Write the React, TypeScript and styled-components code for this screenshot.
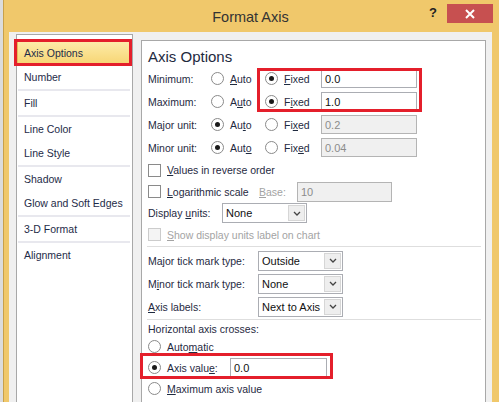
import styled, { createGlobalStyle } from 'styled-components';

const GlobalStyle = createGlobalStyle`
  html, body { margin: 0; padding: 0; }
  body {
    width: 499px;
    height: 402px;
    overflow: hidden;
    background: #dcdcdc;
    font-family: 'Liberation Sans', Arial, sans-serif;
    font-size: 10.5px;
    color: #1f2a3f;
  }
`;

const Screen = styled.div`
  position: relative;
  width: 499px;
  height: 402px;
  overflow: hidden;
  padding-left: 3px;
  box-sizing: border-box;
`;

const Window = styled.div`
  height: 440px;
  background: #f0c86b;
  border-left: 1px solid #c9a14a;
  padding: 0 7px 0 5px;
  display: flex;
  flex-direction: column;
`;

const TitleBar = styled.div`
  display: grid;
  grid-template-columns: 1fr auto 1fr;
  height: 32px;
  flex: none;
`;

const Title = styled.div`
  grid-column: 2;
  margin-top: 8px;
  font-size: 14.5px;
  line-height: 18px;
  color: #333;
`;

const Controls = styled.div`
  grid-column: 3;
  justify-self: end;
  display: flex;
  align-items: flex-start;
  gap: 7px;
  margin-top: 4px;
  margin-right: -1px;
`;

const HelpButton = styled.div`
  width: 14px;
  text-align: center;
  font-weight: bold;
  font-size: 13px;
  line-height: 18px;
  color: #222;
`;

const CloseButton = styled.div`
  width: 46px;
  height: 19px;
  background: #c75050;
  display: flex;
  align-items: center;
  justify-content: center;
`;

const Client = styled.div`
  flex: 1;
  background: #f0f0f0;
  display: flex;
  gap: 8px;
  padding: 2px 6px 0 7px;
`;

const Nav = styled.div`
  width: 117px;
  flex: none;
  box-sizing: border-box;
  background: #fff;
  border: 1px solid #a8a8a8;
  padding-top: 6px;
`;

const NavItem = styled.div<{ $selected?: boolean }>`
  height: 24px;
  box-sizing: border-box;
  margin-right: 2px;
  display: flex;
  align-items: center;
  padding-left: ${(p) => (p.$selected ? '6px' : '7px')};
  color: #1e2b48;
  font-size: 10.5px;
  ${(p) =>
    p.$selected &&
    `
    background: linear-gradient(#fdeca8, #f7d574);
    border: 1px solid #e3bd58;
  `}
`;

const NavDivider = styled.div`
  height: 2px;
  margin: 0 2px 0 1px;
  background: #e8e8ee;
`;

const Panel = styled.div`
  flex: 1;
  margin-top: 6px;
  background: #fff;
  border: 1px solid #a8a8a8;
  padding: 0 4px 0 6px;
`;

const Heading = styled.div`
  margin-top: 6px;
  font-size: 15px;
  line-height: 20px;
  color: #1e2a40;
`;

const Row = styled.div<{ $h: number }>`
  display: flex;
  align-items: center;
  height: ${(p) => p.$h}px;
`;

const Label = styled.div<{ $w?: number; $disabled?: boolean }>`
  width: ${(p) => (p.$w ? `${p.$w}px` : 'auto')};
  flex: none;
  white-space: nowrap;
  color: ${(p) => (p.$disabled ? '#a3a3a3' : '#1f2a3f')};
`;

const Option = styled.div<{ $w?: number; $disabled?: boolean }>`
  display: flex;
  align-items: center;
  gap: 6px;
  width: ${(p) => (p.$w ? `${p.$w}px` : 'auto')};
  flex: none;
  white-space: nowrap;
  color: ${(p) => (p.$disabled ? '#a3a3a3' : '#1f2a3f')};
`;

const Radio = styled.span<{ $checked?: boolean }>`
  width: 13px;
  height: 13px;
  box-sizing: border-box;
  border-radius: 50%;
  border: 1px solid #8a8a8a;
  background: #fff;
  display: flex;
  align-items: center;
  justify-content: center;
  flex: none;
  &::after {
    content: '';
    width: 5px;
    height: 5px;
    border-radius: 50%;
    background: ${(p) => (p.$checked ? '#1a1a1a' : 'transparent')};
  }
`;

const CheckBox = styled.span<{ $disabled?: boolean }>`
  width: 13px;
  height: 13px;
  box-sizing: border-box;
  border: 1px solid ${(p) => (p.$disabled ? '#cccccc' : '#8a8a8a')};
  background: ${(p) => (p.$disabled ? '#f4f4f4' : '#fff')};
  flex: none;
`;

const TextInput = styled.div<{ $w: number; $h?: number; $disabled?: boolean }>`
  width: ${(p) => p.$w}px;
  height: ${(p) => p.$h ?? 19}px;
  box-sizing: border-box;
  flex: none;
  display: flex;
  align-items: center;
  padding-left: 3px;
  font-size: 11px;
  border: 1px solid ${(p) => (p.$disabled ? '#b4b4b4' : '#abadb3')};
  background: ${(p) => (p.$disabled ? '#f0f0f0' : '#fff')};
  color: ${(p) => (p.$disabled ? '#8c8c8c' : '#111')};
`;

const Select = styled.div<{ $w: number }>`
  width: ${(p) => p.$w}px;
  height: 20px;
  box-sizing: border-box;
  flex: none;
  display: flex;
  border: 1px solid #abadb3;
  background: #fff;
`;

const SelectValue = styled.div`
  flex: 1;
  display: flex;
  align-items: center;
  padding-left: 3px;
  font-size: 11px;
  color: #111;
  white-space: nowrap;
  overflow: hidden;
`;

const SelectButton = styled.div`
  width: 17px;
  margin: 1px;
  box-sizing: border-box;
  border: 1px solid #d6d6d6;
  background: #eeeeee;
  display: flex;
  align-items: center;
  justify-content: center;
`;

const Divider = styled.div`
  height: 1px;
  margin: 1px 0 2px -1px;
  background: #dedede;
`;

const Key = styled.span`
  text-decoration: underline;
  text-underline-offset: 1px;
`;

const Callout = styled.div<{ $x: number; $y: number; $w: number; $h: number }>`
  position: absolute;
  left: ${(p) => p.$x}px;
  top: ${(p) => p.$y}px;
  width: ${(p) => p.$w}px;
  height: ${(p) => p.$h}px;
  box-sizing: border-box;
  border: 3px solid #e41f2b;
  pointer-events: none;
`;

const Chevron = () => (
  <svg width="8" height="5" viewBox="0 0 8 5">
    <polyline points="1,1 4,4 7,1" fill="none" stroke="#444" strokeWidth="1.3" />
  </svg>
);

function Dropdown({ w, value }: { w: number; value: string }) {
  return (
    <Select $w={w}>
      <SelectValue>{value}</SelectValue>
      <SelectButton>
        <Chevron />
      </SelectButton>
    </Select>
  );
}

const navGroups = [
  ['Axis Options', 'Number'],
  ['Fill'],
  ['Line Color', 'Line Style'],
  ['Shadow', 'Glow and Soft Edges'],
  ['3-D Format'],
  ['Alignment'],
];

type BoundRow = {
  label: string;
  auto: [string, string, string];
  fixed: [string, string, string];
  autoOn: boolean;
  value: string;
};

const boundRows: BoundRow[] = [
  { label: 'Minimum:', auto: ['', 'A', 'uto'], fixed: ['', 'F', 'ixed'], autoOn: false, value: '0.0' },
  { label: 'Maximum:', auto: ['A', 'u', 'to'], fixed: ['F', 'i', 'xed'], autoOn: false, value: '1.0' },
  { label: 'Major unit:', auto: ['Au', 't', 'o'], fixed: ['Fi', 'x', 'ed'], autoOn: true, value: '0.2' },
  { label: 'Minor unit:', auto: ['Aut', 'o', ''], fixed: ['Fix', 'e', 'd'], autoOn: true, value: '0.04' },
];

const Keyed = ({ parts }: { parts: [string, string, string] }) => (
  <span>
    {parts[0]}
    <Key>{parts[1]}</Key>
    {parts[2]}
  </span>
);

export default function App() {
  return (
    <>
      <GlobalStyle />
      <Screen>
        <Window>
          <TitleBar>
            <Title>Format Axis</Title>
            <Controls>
              <HelpButton>?</HelpButton>
              <CloseButton>
                <svg width="10" height="10" viewBox="0 0 10 10">
                  <path d="M1 1 L9 9 M9 1 L1 9" stroke="#fff" strokeWidth="2" />
                </svg>
              </CloseButton>
            </Controls>
          </TitleBar>

          <Client>
            <Nav>
              {navGroups.map((group, gi) => (
                <div key={gi}>
                  {gi > 0 && <NavDivider />}
                  {group.map((item) => (
                    <NavItem key={item} $selected={item === 'Axis Options'}>
                      {item}
                    </NavItem>
                  ))}
                </div>
              ))}
            </Nav>

            <Panel>
              <Heading>Axis Options</Heading>

              {boundRows.map((r) => (
                <Row $h={23} key={r.label}>
                  <Label $w={63}>{r.label}</Label>
                  <Option $w={54}>
                    <Radio $checked={r.autoOn} />
                    <Keyed parts={r.auto} />
                  </Option>
                  <Option $w={56}>
                    <Radio $checked={!r.autoOn} />
                    <Keyed parts={r.fixed} />
                  </Option>
                  <TextInput $w={96} $disabled={r.autoOn}>
                    {r.value}
                  </TextInput>
                </Row>
              ))}

              <Row $h={22}>
                <Option>
                  <CheckBox />
                  <span>
                    <Key>V</Key>alues in reverse order
                  </span>
                </Option>
              </Row>
              <Row $h={21}>
                <Option $w={111}>
                  <CheckBox />
                  <span>
                    <Key>L</Key>ogarithmic scale
                  </span>
                </Option>
                <Label $w={38} $disabled>
                  <Key>B</Key>ase:
                </Label>
                <TextInput $w={95} $h={20} $disabled>
                  10
                </TextInput>
              </Row>
              <Row $h={22}>
                <Label $w={74}>
                  Display <Key>u</Key>nits:
                </Label>
                <Dropdown w={85} value="None" />
              </Row>
              <Row $h={21}>
                <Option $disabled>
                  <CheckBox $disabled />
                  <span>
                    <Key>S</Key>how display units label on chart
                  </span>
                </Option>
              </Row>

              <Divider />

              <Row $h={23}>
                <Label $w={110}>
                  Ma<Key>j</Key>or tick mark type:
                </Label>
                <Dropdown w={85} value="Outside" />
              </Row>
              <Row $h={23}>
                <Label $w={110}>
                  M<Key>i</Key>nor tick mark type:
                </Label>
                <Dropdown w={85} value="None" />
              </Row>
              <Row $h={23}>
                <Label $w={110}>
                  <Key>A</Key>xis labels:
                </Label>
                <Dropdown w={85} value="Next to Axis" />
              </Row>

              <Divider />

              <Row $h={14}>
                <Label>Horizontal axis crosses:</Label>
              </Row>
              <Row $h={21}>
                <Option>
                  <Radio />
                  <span>
                    Auto<Key>m</Key>atic
                  </span>
                </Option>
              </Row>
              <Row $h={21}>
                <Option $w={82}>
                  <Radio $checked />
                  <span>
                    Axis valu<Key>e</Key>:
                  </span>
                </Option>
                <TextInput $w={97}>0.0</TextInput>
              </Row>
              <Row $h={21}>
                <Option>
                  <Radio />
                  <span>
                    <Key>M</Key>aximum axis value
                  </span>
                </Option>
              </Row>
            </Panel>
          </Client>
        </Window>

        <Callout $x={14} $y={39} $w={118} $h={27} />
        <Callout $x={257} $y={68} $w={165} $h={44} />
        <Callout $x={140} $y={353} $w={193} $h={26} />
      </Screen>
    </>
  );
}
